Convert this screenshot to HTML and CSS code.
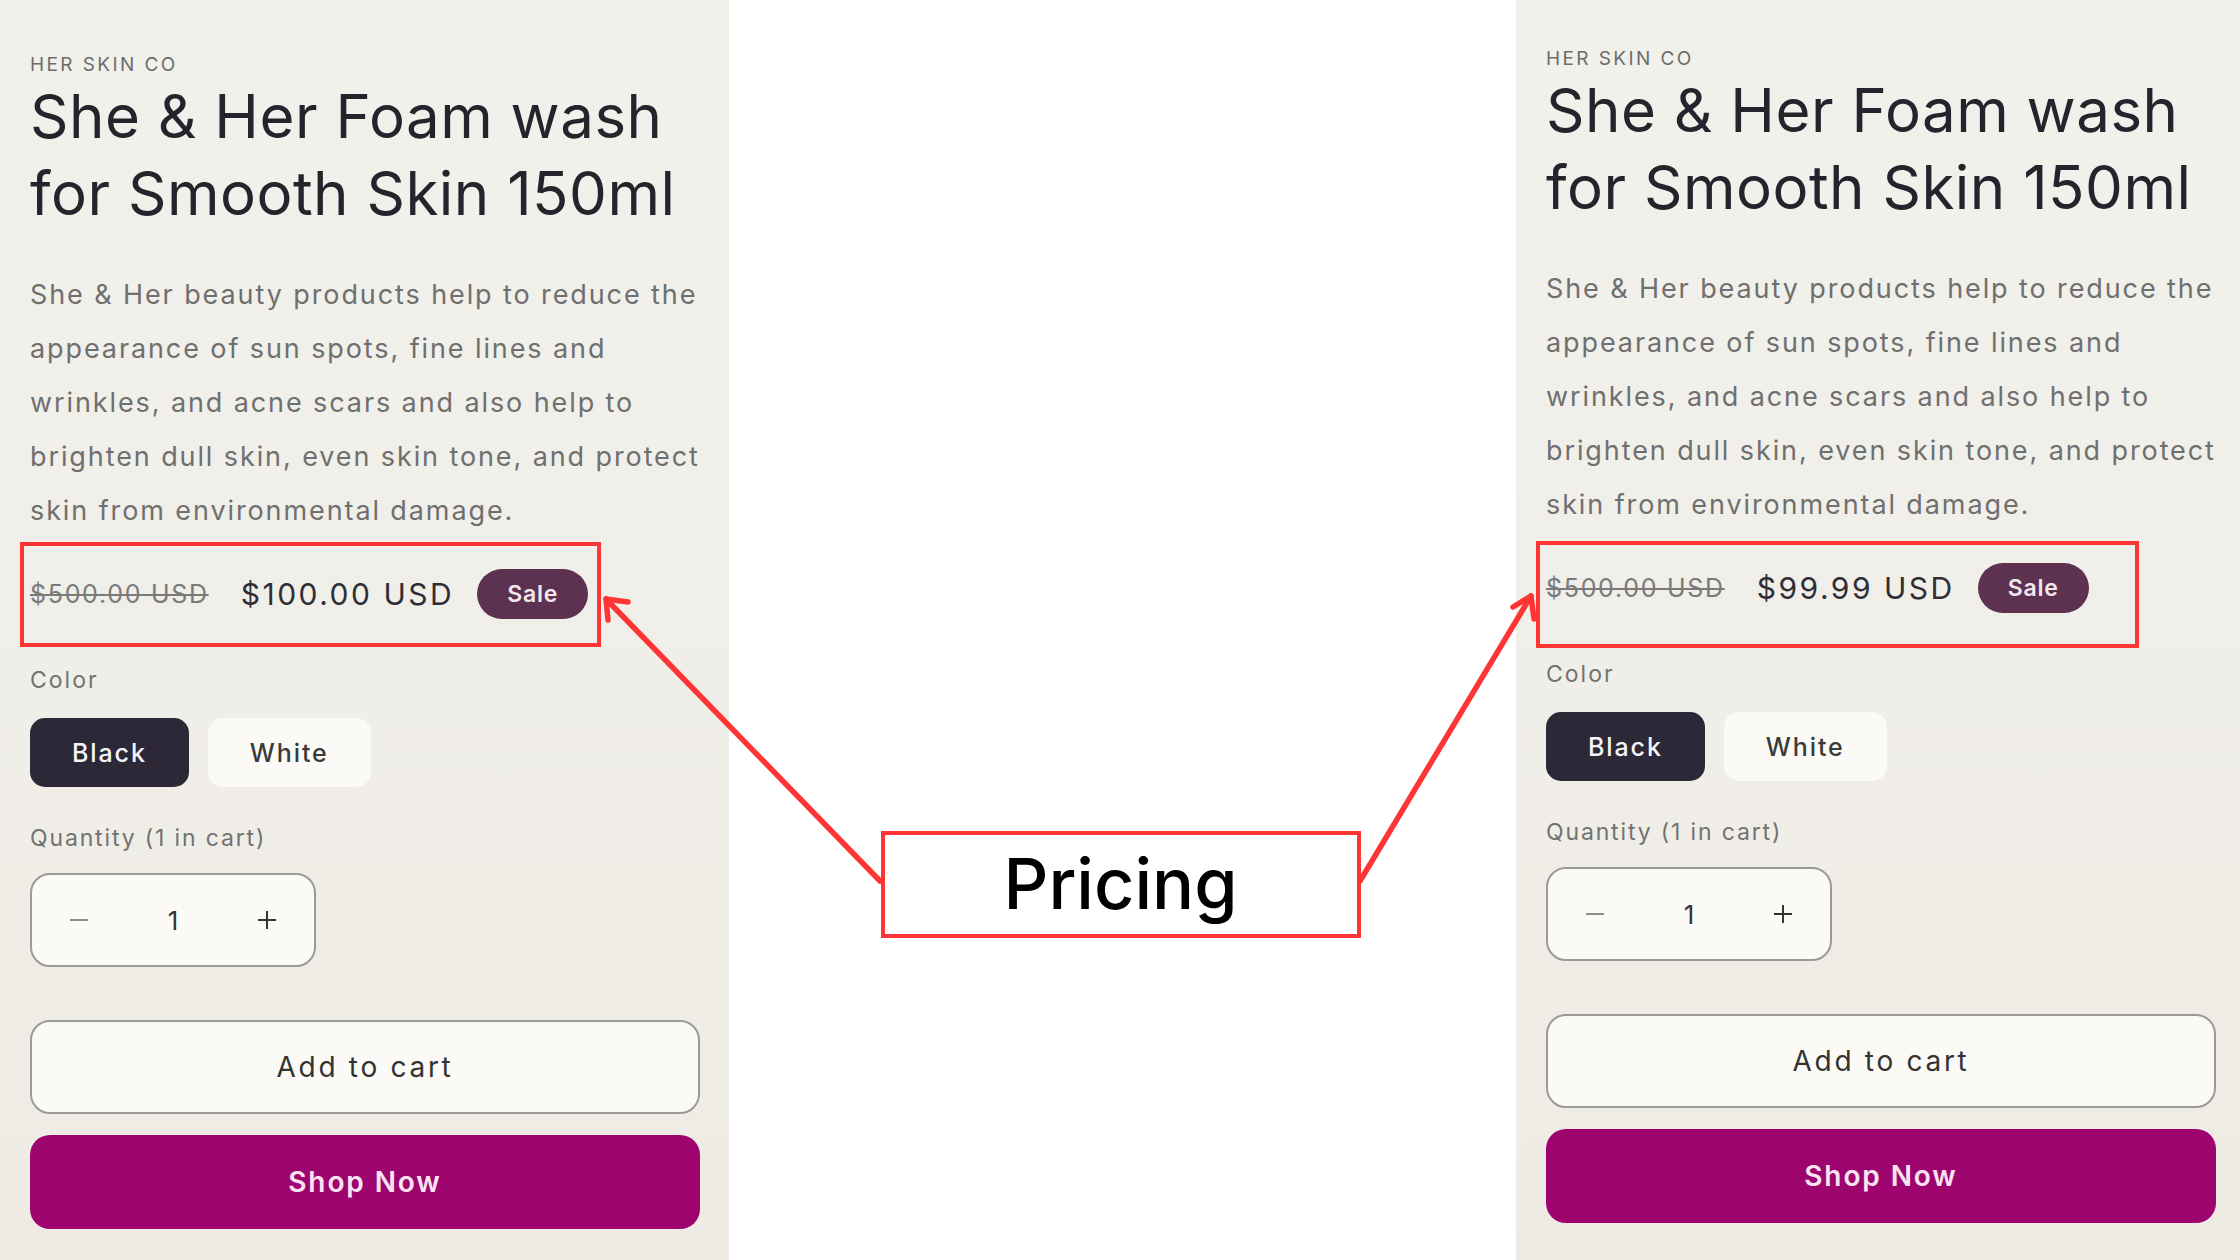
FILE: index.html
```html
<!DOCTYPE html>
<html lang="en">
<head>
  <meta charset="UTF-8" />
  <meta name="viewport" content="width=device-width, initial-scale=1.0" />
  <title>Pricing</title>
  <link rel="stylesheet" href="styles.css">
</head>
<body>
  <div class="page">
    <section class="product">
      <p class="vendor">HER SKIN CO</p>
      <h1 class="title">She &amp; Her Foam wash<br>for Smooth Skin 150ml</h1>
      <p class="desc">She &amp; Her beauty products help to reduce the<br>appearance of sun spots, fine lines and<br>wrinkles, and acne scars and also help to<br>brighten dull skin, even skin tone, and protect<br>skin from environmental damage.</p>
      <div class="price">
        <s class="price-old">$500.00 USD</s>
        <span class="price-new">$100.00 USD</span>
        <span class="badge">Sale</span>
      </div>
      <p class="label">Color</p>
      <div class="swatches">
        <button class="swatch active">Black</button>
        <button class="swatch">White</button>
      </div>
      <p class="label label-qty">Quantity (1 in cart)</p>
      <div class="qty">
        <button class="qty-btn minus"><svg width="20" height="20" viewBox="0 0 20 20"><path d="M1 10h18" /></svg></button>
        <span class="qty-val">1</span>
        <button class="qty-btn"><svg width="20" height="20" viewBox="0 0 20 20"><path d="M1 10h18M10 1v18" /></svg></button>
      </div>
      <button class="btn btn-cart">Add to cart</button>
      <button class="btn btn-shop">Shop Now</button>
    </section>

    <div class="gutter">
      <div class="callout">Pricing</div>
    </div>

    <section class="product product-after">
      <p class="vendor">HER SKIN CO</p>
      <h1 class="title">She &amp; Her Foam wash<br>for Smooth Skin 150ml</h1>
      <p class="desc">She &amp; Her beauty products help to reduce the<br>appearance of sun spots, fine lines and<br>wrinkles, and acne scars and also help to<br>brighten dull skin, even skin tone, and protect<br>skin from environmental damage.</p>
      <div class="price">
        <s class="price-old">$500.00 USD</s>
        <span class="price-new">$99.99 USD</span>
        <span class="badge">Sale</span>
      </div>
      <p class="label">Color</p>
      <div class="swatches">
        <button class="swatch active">Black</button>
        <button class="swatch">White</button>
      </div>
      <p class="label label-qty">Quantity (1 in cart)</p>
      <div class="qty">
        <button class="qty-btn minus"><svg width="20" height="20" viewBox="0 0 20 20"><path d="M1 10h18" /></svg></button>
        <span class="qty-val">1</span>
        <button class="qty-btn"><svg width="20" height="20" viewBox="0 0 20 20"><path d="M1 10h18M10 1v18" /></svg></button>
      </div>
      <button class="btn btn-cart">Add to cart</button>
      <button class="btn btn-shop">Shop Now</button>
    </section>
  </div>

  <!-- annotation layer: highlight boxes and arrows -->
  <svg class="notes" width="2240" height="1260" viewBox="0 0 2240 1260">
    <g fill="none" stroke="#ff3535" stroke-width="4">
      <rect x="22" y="544" width="577" height="101" />
      <rect x="1538" y="543" width="599" height="103" />
    </g>
    <g fill="none" stroke="#ff3535" stroke-width="5.5" stroke-linecap="round" stroke-linejoin="round">
      <path d="M880 881L606 599" />
      <path d="M628 602L606 599L608 620" />
      <path d="M1360 881L1531 596" />
      <path d="M1513 607L1531 596L1534 619" />
    </g>
  </svg>
</body>
</html>
```

FILE: styles.css
```css
body {
  margin: 0;
  background: #ffffff;
  font-family: Inter, "Liberation Sans", sans-serif;
  color: #26252d;
  overflow: hidden;
}
.page {
  display: flex;
  height: 1260px;
}
.product {
  width: 729px;
  box-sizing: border-box;
  padding: 53px 29px 0 30px;
  background: linear-gradient(180deg, #f1f1ec 0%, #f0eee8 55%, #efebe4 100%);
  display: flex;
  flex-direction: column;
  align-items: flex-start;
}
.product-after {
  width: 724px;
  padding-top: 47px;
  padding-right: 24px;
}
.gutter {
  flex: 1;
  display: flex;
  justify-content: center;
  align-items: flex-start;
  padding-top: 831px;
  padding-right: 4px;
}
.callout {
  width: 480px;
  height: 107px;
  box-sizing: border-box;
  border: 4px solid #ff3535;
  display: flex;
  align-items: center;
  justify-content: center;
  font-size: 70px;
  font-weight: 500;
  color: #000;
  padding-bottom: 2px;
}
p {
  margin: 0;
}
.vendor {
  font-size: 19px;
  line-height: 24px;
  letter-spacing: 2.4px;
  color: #6c6c6c;
}
.title {
  margin: 1px 0 0;
  font-size: 60px;
  line-height: 77px;
  font-weight: 400;
  color: #25242c;
  letter-spacing: 0.5px;
}
.desc {
  margin-top: 36px;
  font-size: 27px;
  line-height: 54px;
  color: #6f6f6f;
  letter-spacing: 1.9px;
  white-space: nowrap;
}
.price {
  margin-top: 31px;
  display: flex;
  align-items: center;
  height: 50px;
}
.price-old {
  font-size: 25px;
  color: #7a7a7a;
  letter-spacing: 1.7px;
  text-decoration-thickness: 2px;
  margin-right: 32px;
}
.price-new {
  font-size: 30px;
  color: #2f2e36;
  letter-spacing: 2.5px;
  margin-right: 23px;
}
.badge {
  height: 50px;
  padding: 0 30px;
  border-radius: 25px;
  background: #5d3150;
  color: #f3e7ee;
  font-size: 23px;
  font-weight: 600;
  letter-spacing: 0.8px;
  display: flex;
  align-items: center;
}
.label {
  margin-top: 46px;
  font-size: 23px;
  line-height: 30px;
  color: #727272;
  letter-spacing: 2px;
}
.label-qty {
  margin-top: 36px;
  letter-spacing: 1.85px;
}
button {
  font-family: inherit;
  cursor: pointer;
}
.swatches {
  margin-top: 23px;
  display: flex;
  gap: 19px;
}
.swatch {
  height: 69px;
  padding: 0 42px;
  border: none;
  border-radius: 15px;
  background: #fbfaf6;
  color: #3a3a3a;
  font-size: 25px;
  font-weight: 500;
  letter-spacing: 1.9px;
}
.swatch.active {
  background: #2c2838;
  color: #f5f4f7;
}
.qty {
  margin-top: 20px;
  width: 286px;
  height: 94px;
  box-sizing: border-box;
  border: 2px solid #9a9a9a;
  border-radius: 20px;
  background: #fbfaf6;
  display: grid;
  grid-template-columns: repeat(3, 1fr);
  align-items: center;
  justify-items: center;
}
.qty-btn {
  background: none;
  border: none;
  padding: 0;
  display: flex;
  stroke: #333;
  stroke-width: 2;
}
.qty-btn.minus {
  stroke: #8c8c8c;
}
.qty-val {
  font-size: 26px;
  color: #333;
}
.btn {
  width: 100%;
  height: 94px;
  border-radius: 20px;
  font-size: 28px;
  letter-spacing: 2.7px;
}
.btn-cart {
  margin-top: 53px;
  border: 2px solid #9a9a9a;
  background: #fbfaf6;
  color: #333;
}
.btn-shop {
  margin-top: 21px;
  border: none;
  background: #9d046d;
  color: #f9e3f1;
  font-weight: 600;
  letter-spacing: 1.9px;
}
.notes {
  position: absolute;
  left: 0;
  top: 0;
  pointer-events: none;
}
```
